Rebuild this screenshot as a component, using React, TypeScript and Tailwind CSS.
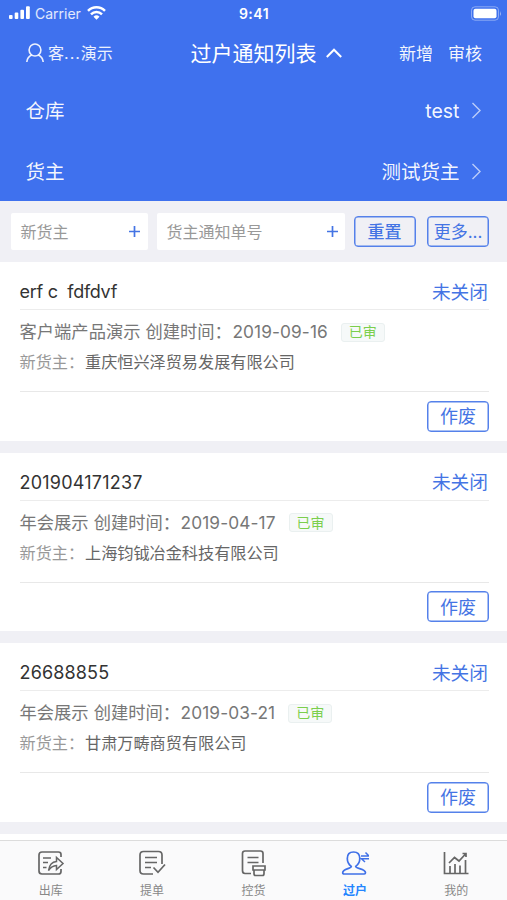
import type { ReactNode } from 'react';

type Notice = { title: string; spacing: string; org: string; date: string; owner: string };

const notices: Notice[] = [
  { title: 'erf c  fdfdvf', spacing: 'tracking-[-0.27px]', org: '客户端产品演示', date: '2019-09-16', owner: '重庆恒兴泽贸易发展有限公司' },
  { title: '201904171237', spacing: 'tracking-[0.22px]', org: '年会展示', date: '2019-04-17', owner: '上海钧钺冶金科技有限公司' },
  { title: '26688855', spacing: 'tracking-[0.15px]', org: '年会展示', date: '2019-03-21', owner: '甘肃万畴商贸有限公司' },
];

function StatusBar() {
  return (
    <div className="flex h-[26px] items-center justify-between pl-[9px] pr-[5px]">
      <div className="flex w-[200px] items-center">
        <svg width="21" height="14" viewBox="0 0 21 14" fill="#fff">
          <rect x="0" y="9" width="3.6" height="4" rx="1" />
          <rect x="5.7" y="6.6" width="3.6" height="6.4" rx="1" />
          <rect x="11.4" y="3.8" width="3.6" height="9.2" rx="1" />
          <rect x="17" y="0.3" width="3.8" height="12.7" rx="1" />
        </svg>
        <span className="ml-[5px] text-[14px] text-white/85">Carrier</span>
        <svg className="ml-[6px]" width="19" height="14" viewBox="0 0 19 14" fill="none" stroke="#fff" strokeWidth="2.5">
          <path d="M1 4.9a12 12 0 0 1 17 0" />
          <path d="M4 8.3a7.8 7.8 0 0 1 11 0" />
          <path d="M6.5 10.8a4.3 4.3 0 0 1 6 0L9.5 13.7Z" fill="#fff" stroke="none" />
        </svg>
      </div>
      <span className="mr-[3px] text-[14px] font-semibold tracking-[0.5px] text-white">9:41</span>
      <div className="flex w-[200px] justify-end">
        <svg width="32" height="15" viewBox="0 0 32 15">
          <rect x="1.5" y="0.8" width="27" height="13.4" rx="3.5" fill="none" stroke="#fff" strokeOpacity="0.4" />
          <rect x="3.5" y="2.7" width="23" height="9.6" rx="2" fill="#fff" />
          <path d="M30 5v5q1.8-2.5 0-5Z" fill="#fff" fillOpacity="0.5" />
        </svg>
      </div>
    </div>
  );
}

function TitleBar() {
  return (
    <div className="flex h-[54px] items-center justify-between pl-[26px] pr-[25px] text-white">
      <div className="flex w-[130px] items-center">
        <svg width="18" height="20" viewBox="0 0 18 20" fill="none" stroke="#fff" strokeOpacity="0.9" strokeWidth="1.6">
          <ellipse cx="9" cy="7" rx="5.9" ry="6" />
          <path d="M.8 19c.3-3.600 2.100-6 5-7.100M17.200 19c-.3-3.600-2.100-6-5-7.100" />
        </svg>
        <span className="ml-[4px] text-[16px] text-white/90">
          客<span className="tracking-[1px]">...</span>演示
        </span>
      </div>
      <div className="flex items-center whitespace-nowrap pt-px text-[21px]">
        过户通知列表
        <svg className="mb-px ml-[9px]" width="16" height="10" viewBox="0 0 16 10" fill="none" stroke="#fff" strokeWidth="2">
          <path d="M.8 9 8 1.700 15.200 9" />
        </svg>
      </div>
      <div className="flex w-[106px] justify-end gap-[15px] pt-[3px] text-[17px] text-white/95">
        <span>新增</span>
        <span>审核</span>
      </div>
    </div>
  );
}

function PickerRow({ label, children }: { label: string; children: ReactNode }) {
  return (
    <div className="flex h-[61px] items-center justify-between pl-[25.5px] pr-[25px] pt-[2px] text-[19.5px] text-white/95">
      <span>{label}</span>
      <span className="flex items-center">
        {children}
        <svg className="mb-[2px] ml-[11.5px]" width="11" height="17" viewBox="0 0 11 17" fill="none" stroke="#fff" strokeOpacity="0.65" strokeWidth="1.4">
          <path d="m1.500 1 7.500 7.500L1.500 16" />
        </svg>
      </span>
    </div>
  );
}

function Field({ text, className }: { text: string; className: string }) {
  return (
    <div className={`flex h-[37px] items-center justify-between rounded-[2px] bg-white pl-[10px] text-[16px] text-[#999] ${className}`}>
      <span className="pt-px">{text}</span>
      <svg width="11" height="11" viewBox="0 0 11 11" stroke="#4474e4" strokeWidth="1.7">
        <path d="M5.500 0v11M0 5.500h11" />
      </svg>
    </div>
  );
}

function OutlineButton({ children, className }: { children: ReactNode; className: string }) {
  return (
    <button className={`flex h-[31px] shrink-0 items-center justify-center rounded-[4px] border border-[#5581ea] pt-[2px] leading-none text-[#4474e4] shadow-[inset_0_0_0_0.5px_#5581ea] ${className}`}>
      {children}
    </button>
  );
}

function NoticeCard({ notice }: { notice: Notice }) {
  return (
    <section className="mb-[12px] h-[178.5px] shrink-0 bg-white pl-[19.5px] pr-[18px]">
      <div className="flex h-[48px] items-center justify-between border-b border-[#ececec] pt-[12px] text-[18px] text-[#333]">
        <span className={`whitespace-pre ${notice.spacing}`}>{notice.title}</span>
        <span className="mr-px pt-[3px] text-[18.7px] text-[#4474e4]">未关闭</span>
      </div>
      <div className="h-[82px] border-b border-[#e8e8e8] pt-[7px]">
        <div className="flex h-[30px] items-center text-[17.3px] text-[#777]">
          <span>{notice.org}</span>
          <span className="ml-[5px]">创建时间：</span>
          <span className="ml-[0.5px] text-[17.3px] tracking-[0.1px]">{notice.date}</span>
          <span className="ml-[13px] flex h-[19px] w-[44px] items-center justify-center rounded-[3px] border border-[#eaf0f0] bg-[#f6f9f9] text-[14px] leading-none text-[#7bcf4c]">
            已审
          </span>
        </div>
        <div className="flex h-[31px] items-center text-[16.15px] text-[#666]">
          <span className="w-[65.5px] whitespace-nowrap text-[#999]">新货主：</span>
          <span>{notice.owner}</span>
        </div>
      </div>
      <div className="flex h-[48px] items-center justify-end">
        <OutlineButton className="w-[62px] text-[18px]">作废</OutlineButton>
      </div>
    </section>
  );
}

function Tab({ label, active, children }: { label: string; active?: boolean; children: ReactNode }) {
  return (
    <div className={`flex flex-1 flex-col items-center pt-[8px] ${active ? 'text-[#3f70e8]' : 'text-[#666]'}`}>
      <svg width="28" height="28" viewBox="0 0 28 28" fill="none" stroke="currentColor" strokeWidth="1.7">
        {children}
      </svg>
      <span className={`mt-[6px] text-[12px] leading-[16px] ${active ? 'font-bold text-[#2485ff]' : 'text-[#888]'}`}>{label}</span>
    </div>
  );
}

function TabBar() {
  return (
    <nav className="flex h-[60px] shrink-0 border-t border-[#dcdcdc] bg-[#fafafb]">
      <Tab label="出库">
        <path d="M24 8V5.500Q24 3 21.500 3H5Q2 3 2 6v16q0 3 3 3h16.500q2.500 0 2.500-2.500V20M6 9h8M6 13.500h5M6 18.500h3.500" />
        <path d="M11.500 21.500c.8-5.400 3.300-8.600 8-9V8.500l6.500 6-6.500 6v-4c-3.500.2-5.700 1.500-8 5Z" strokeWidth="1.5" />
      </Tab>
      <Tab label="提单">
        <path d="M24 15V6q0-3.500-3.500-3.500H5.500Q2 2.500 2 6v15.500Q2 25 5.500 25H15M7 8.500h12M7 13.500h12M7 18.500h6M15.500 18.500l4.500 4.800 7-7.800" />
      </Tab>
      <Tab label="控货">
        <path d="M23 14V4.500Q23 2 20.500 2H5Q2.500 2 2.500 4.500v17Q2.500 24.500 5 24.500H11M7.500 8.500H18.500M7.500 13.500H18.500" />
        <path d="M13 17h12v4H13zM14 21h10v3.500q0 2-1.500 2h-7Q14 26.500 14 24.500Z" />
      </Tab>
      <Tab label="过户" active>
        <path d="M10.300 17.400c-2.800-2-4-4.400-4-7.900 0-4 2.400-6.500 6.200-6.500s6.300 2.500 6.300 6.500c0 3.500-1.300 5.900-4.100 7.900 0 2.500 9.800 2 9.800 6.300q0 1.300-1.300 1.300H3q-1.300 0-1.300-1.300c0-4.300 8.600-3.800 8.600-6.300Z" />
        <path d="M20 7h8l-3.500-3.500M28 9.800H20.500l3.500 3.200" strokeWidth="1.5" />
      </Tab>
      <Tab label="我的">
        <path d="M2.500 3v21.500H26.500M8 24v-7M13 24V15M18 24v-7.500M23.500 24V11M7 14l5.500-5.500L17 12l7-7.500M20.500 4.500H24V8" />
      </Tab>
    </nav>
  );
}

export default function App() {
  return (
    <div className="flex h-[900px] w-[507px] flex-col overflow-hidden bg-[#f0f0f5] font-[Inter,'Noto_Sans_CJK_SC',sans-serif]">
      <header className="h-[201px] shrink-0 bg-[#3f71ee]">
        <StatusBar />
        <TitleBar />
        <PickerRow label="仓库">test</PickerRow>
        <PickerRow label="货主">测试货主</PickerRow>
      </header>
      <div className="flex h-[61px] shrink-0 items-center pl-[10.5px]">
        <Field text="新货主" className="w-[137.5px] pr-[8px]" />
        <Field text="货主通知单号" className="ml-[8.5px] w-[188px] pr-[7px]" />
        <OutlineButton className="ml-[9px] w-[62px] text-[17px] font-medium">重置</OutlineButton>
        <OutlineButton className="ml-[11.5px] w-[62px] text-[17px]">更多...</OutlineButton>
      </div>
      <main className="flex min-h-0 flex-1 flex-col overflow-hidden">
        {notices.map((notice) => (
          <NoticeCard key={notice.title} notice={notice} />
        ))}
        <div className="flex-1 bg-white" />
      </main>
      <TabBar />
    </div>
  );
}
